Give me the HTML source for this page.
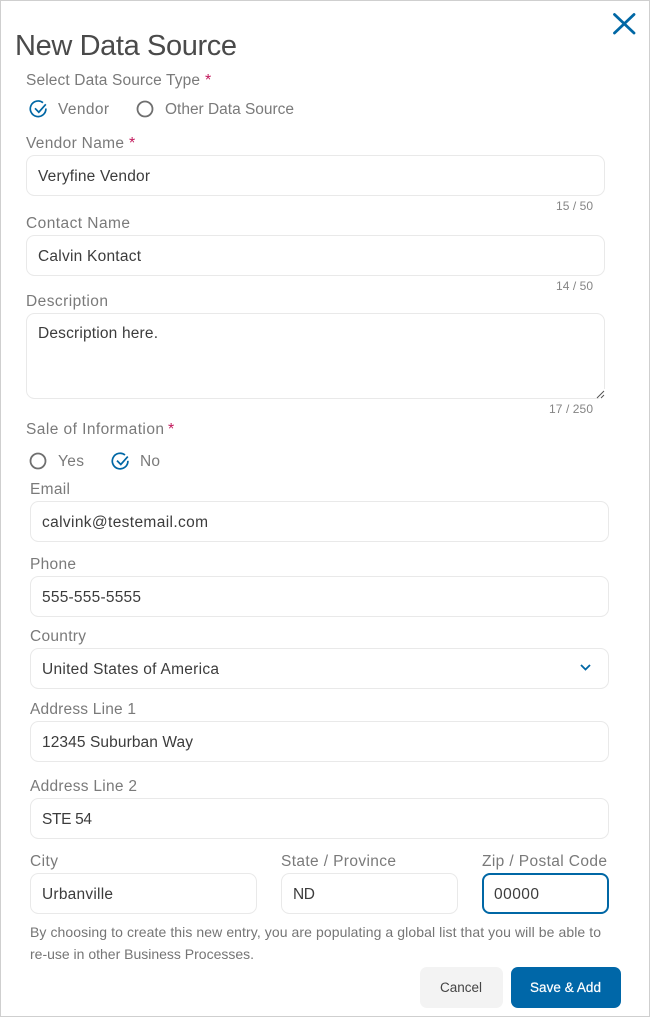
<!DOCTYPE html>
<html><head><meta charset="utf-8"><style>
html,body{margin:0;padding:0;background:#fff}
svg{display:block}
text{font-family:"Liberation Sans",sans-serif;white-space:pre}
.l{font-size:15.5px;fill:#7a7a7a}
.v{font-size:15.5px;fill:#3c3c3c}
.c{font-size:12px;fill:#858585}
.p{font-size:14px;fill:#757575}
.s{font-size:16px;fill:#c2185b}
.b{fill:#fff;stroke:#e9e9e9;stroke-width:1}
</style></head><body>
<svg width="650" height="1017" viewBox="0 0 650 1017" xmlns="http://www.w3.org/2000/svg">
<rect x="0.5" y="0.5" width="649" height="1016" fill="#fff" stroke="#cfcfcf"/>
<path d="M614.5 14.5L634 33M634 14.500L614.500 33" stroke="#0067a5" stroke-width="2.800" stroke-linecap="round" fill="none"/>
<text x="15" y="55" font-size="29" fill="#4a4a4a" textLength="222">New Data Source</text>

<text class="l" x="26" y="85" textLength="174">Select Data Source Type</text><text class="s" x="205" y="85">*</text>
<path d="M43 102.700A7.800 7.800 0 1 0 45.900 108.500" stroke="#0067a5" stroke-width="1.700" fill="none"/>
<path d="M35 108.300L38.800 112.200L45.800 104.300" stroke="#0067a5" stroke-width="1.700" fill="none"/>
<text class="l" x="58" y="114" textLength="51">Vendor</text>
<circle cx="145" cy="109" r="7.500" fill="none" stroke="#6f6f6f" stroke-width="1.800"/>
<text class="l" x="165" y="114" textLength="129">Other Data Source</text>

<text class="l" x="26" y="148" textLength="98">Vendor Name</text><text class="s" x="129" y="148">*</text>
<rect class="b" x="26.500" y="155.500" width="578" height="40" rx="8"/>
<text class="v" x="38" y="181" textLength="112">Veryfine Vendor</text>
<text class="c" x="556" y="210" textLength="37">15 / 50</text>

<text class="l" x="26" y="228" textLength="104">Contact Name</text>
<rect class="b" x="26.500" y="235.500" width="578" height="40" rx="8"/>
<text class="v" x="38" y="261" textLength="103">Calvin Kontact</text>
<text class="c" x="556" y="290" textLength="37">14 / 50</text>

<text class="l" x="26" y="306" textLength="82">Description</text>
<rect class="b" x="26.500" y="313.500" width="578" height="85" rx="8"/>
<text class="v" x="38" y="338" textLength="120">Description here.</text>
<rect x="596" y="389" width="9" height="9" fill="#fff"/>
<path d="M597 398L604 391M601 398L604 395" stroke="#555" stroke-width="1" fill="none"/>
<text class="c" x="549" y="413" textLength="44">17 / 250</text>

<text class="l" x="26" y="434" textLength="138">Sale of Information</text><text class="s" x="168" y="434">*</text>
<circle cx="38" cy="461" r="7.500" fill="none" stroke="#6f6f6f" stroke-width="1.800"/>
<text class="l" x="58" y="466" textLength="26">Yes</text>
<path d="M125 455A7.800 7.800 0 1 0 127.900 460.800" stroke="#0067a5" stroke-width="1.700" fill="none"/>
<path d="M117 460.600L120.800 464.500L127.800 456.600" stroke="#0067a5" stroke-width="1.700" fill="none"/>
<text class="l" x="140" y="466" textLength="20">No</text>

<text class="l" x="30" y="494" textLength="40">Email</text>
<rect class="b" x="30.500" y="501.500" width="578" height="40" rx="8"/>
<text class="v" x="42" y="527" textLength="166">calvink@testemail.com</text>

<text class="l" x="30" y="569" textLength="46">Phone</text>
<rect class="b" x="30.500" y="576.500" width="578" height="40" rx="8"/>
<text class="v" x="42" y="602" textLength="99">555-555-5555</text>

<text class="l" x="30" y="641" textLength="56">Country</text>
<rect class="b" x="30.500" y="648.500" width="578" height="40" rx="8"/>
<text class="v" x="42" y="674" textLength="177">United States of America</text>
<path d="M581 665L585.500 669.500L590 665" stroke="#0067a5" stroke-width="1.800" fill="none"/>

<text class="l" x="30" y="714" textLength="106">Address Line 1</text>
<rect class="b" x="30.500" y="721.500" width="578" height="40" rx="8"/>
<text class="v" x="42" y="747" textLength="151">12345 Suburban Way</text>

<text class="l" x="30" y="791" textLength="107">Address Line 2</text>
<rect class="b" x="30.500" y="798.500" width="578" height="40" rx="8"/>
<text class="v" x="42" y="824" textLength="50">STE 54</text>

<text class="l" x="30" y="866" textLength="28">City</text>
<text class="l" x="281" y="866" textLength="115">State / Province</text>
<text class="l" x="482" y="866" textLength="125">Zip / Postal Code</text>
<rect class="b" x="30.500" y="873.500" width="226" height="40" rx="8"/>
<rect class="b" x="281.500" y="873.500" width="176" height="40" rx="8"/>
<rect x="483" y="874" width="125" height="39" rx="7" fill="#fff" stroke="#0067a5" stroke-width="2"/>
<text class="v" x="42" y="899" textLength="71">Urbanville</text>
<text class="v" x="293" y="899" textLength="22">ND</text>
<text class="v" x="494" y="899" textLength="45">00000</text>

<text class="p" x="30" y="937" textLength="571">By choosing to create this new entry, you are populating a global list that you will be able to</text>
<text class="p" x="30" y="959" textLength="224">re-use in other Business Processes.</text>

<rect x="420" y="967" width="83" height="41" rx="7" fill="#f3f3f3"/>
<text x="440" y="992" font-size="13.500" fill="#444" textLength="42">Cancel</text>
<rect x="511" y="967" width="110" height="41" rx="7" fill="#0067a8"/>
<text x="530" y="992" font-size="13.500" fill="#fff" stroke="#fff" stroke-width="0.200" textLength="71">Save &amp; Add</text>
</svg>
</body></html>
